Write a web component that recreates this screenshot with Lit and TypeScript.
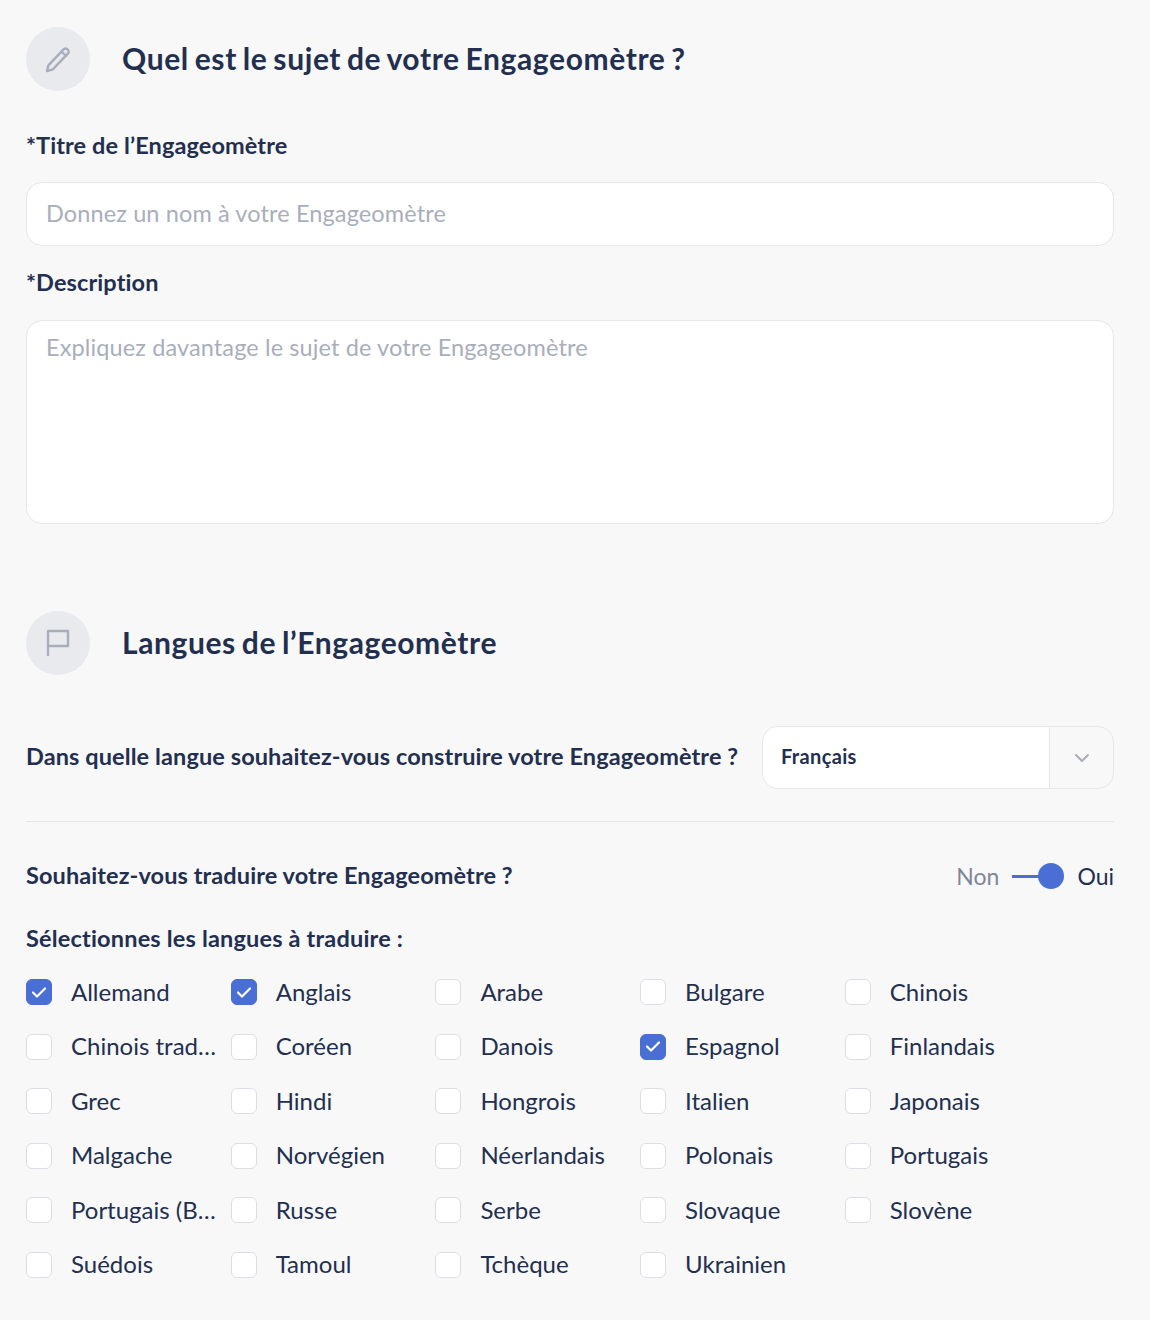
import { LitElement, html, css } from 'lit';
import { customElement, state } from 'lit/decorators.js';

const LANGUAGES = [
  'Allemand', 'Anglais', 'Arabe', 'Bulgare', 'Chinois',
  'Chinois trad…', 'Coréen', 'Danois', 'Espagnol', 'Finlandais',
  'Grec', 'Hindi', 'Hongrois', 'Italien', 'Japonais',
  'Malgache', 'Norvégien', 'Néerlandais', 'Polonais', 'Portugais',
  'Portugais (B…', 'Russe', 'Serbe', 'Slovaque', 'Slovène',
  'Suédois', 'Tamoul', 'Tchèque', 'Ukrainien',
];

@customElement('app-root')
export class AppRoot extends LitElement {
  static styles = css`
    :host {
      display: block;
      min-height: 1320px;
      box-sizing: border-box;
      padding: 27px 36px 0 26px;
      background-color: #f8f8f9;
      color: #232f4f;
      font-family: 'Lato', 'Liberation Sans', sans-serif;
    }

    .section-head {
      display: flex;
      align-items: center;
      gap: 32px;
      height: 64px;
    }

    .circle {
      display: flex;
      align-items: center;
      justify-content: center;
      width: 64px;
      height: 64px;
      border-radius: 50%;
      background-color: #e9eaee;
    }

    h2 {
      margin: 0 0 3px;
      font-size: 30px;
      font-weight: 700;
      line-height: 60px;
      letter-spacing: 0.6px;
      word-spacing: -2px;
    }

    label,
    .question {
      display: block;
      font-size: 23.5px;
      font-weight: 700;
      line-height: 30px;
      letter-spacing: 0.1px;
    }

    .title-label {
      margin: 39px 0 22px;
    }

    .desc-label {
      margin: 21px 0 23px;
    }

    input,
    textarea {
      display: block;
      box-sizing: border-box;
      width: 100%;
      border: 1px solid #e6e7eb;
      border-radius: 16px;
      background: #fff;
      padding: 0 19px;
      outline: none;
      resize: none;
      color: #232f4f;
      font: 400 23.5px/30px 'Lato', 'Liberation Sans', sans-serif;
      letter-spacing: 0.12px;
    }

    input {
      height: 64px;
      padding-bottom: 3px;
    }

    textarea {
      height: 204px;
      padding-top: 11px;
    }

    ::placeholder {
      color: #a9aebc;
      opacity: 1;
    }

    .languages {
      margin-top: 87px;
    }

    .build-row {
      display: flex;
      align-items: center;
      justify-content: space-between;
      height: 63px;
      margin-top: 51px;
      padding-bottom: 32px;
      border-bottom: 1px solid #e6e7eb;
      box-sizing: content-box;
    }

    .build-row .question {
      margin-bottom: 3px;
    }

    .select {
      display: flex;
      width: 352px;
      height: 63px;
      box-sizing: border-box;
      border: 1px solid #e6e7eb;
      border-radius: 16px;
      overflow: hidden;
    }

    .select-value {
      flex: 1;
      display: flex;
      align-items: center;
      padding: 0 0 3px 18px;
      background: #fff;
      font-size: 20px;
      font-weight: 700;
      letter-spacing: 0.35px;
    }

    .select-arrow {
      display: flex;
      align-items: center;
      justify-content: center;
      width: 63px;
      border-left: 1px solid #e6e7eb;
    }

    .translate-row {
      display: flex;
      align-items: center;
      justify-content: space-between;
      height: 30px;
      margin-top: 39px;
    }

    .translate-row .question {
      margin-bottom: 3px;
    }

    .toggle {
      display: flex;
      align-items: center;
      font-size: 23px;
    }

    .toggle .off {
      color: #7f8699;
    }

    .switch {
      position: relative;
      width: 52px;
      height: 26px;
      margin: 0 13px;
    }

    .switch::before {
      content: '';
      position: absolute;
      left: 0;
      top: 12px;
      width: 30px;
      height: 3px;
      background-color: #4a6fd4;
    }

    .switch::after {
      content: '';
      position: absolute;
      right: 0;
      top: 0;
      width: 26px;
      height: 26px;
      border-radius: 50%;
      background-color: #4a6fd4;
    }

    .question.select-title {
      margin-top: 32px;
      letter-spacing: 0.18px;
    }

    .grid {
      display: grid;
      grid-template-columns: repeat(5, 204.7px);
      grid-auto-rows: 54.5px;
      margin-top: 12px;
    }

    .lang {
      display: flex;
      align-items: center;
      gap: 19px;
      font-size: 24px;
      font-weight: 400;
      cursor: pointer;
    }

    .lang-name {
      padding-bottom: 2px;
    }

    .box {
      flex: none;
      display: flex;
      align-items: center;
      justify-content: center;
      box-sizing: border-box;
      width: 26px;
      height: 26px;
      border: 1px solid #dcdee3;
      border-radius: 6px;
      background: #fff;
    }

    .box.on {
      border-color: #4a6fd4;
      background-color: #4a6fd4;
    }
  `;

  @state() checked = new Set(['Allemand', 'Anglais', 'Espagnol']);

  toggle(name: string) {
    const next = new Set(this.checked);
    if (next.has(name)) next.delete(name);
    else next.add(name);
    this.checked = next;
  }

  render() {
    return html`
      <div class="section-head">
        <div class="circle">
          <svg width="30" height="30" viewBox="0 0 30 30" fill="none" stroke="#a9aebc" stroke-width="2.4" stroke-linejoin="round" stroke-linecap="round">
            <path d="M4 27l1.4-5.6L20.8 5.2a2.4 2.4 0 0 1 3.4 0l.8.8a2.4 2.4 0 0 1 0 3.4L9.8 25.4z" />
            <path d="M18.5 7.5l4.5 4.5" />
          </svg>
        </div>
        <h2>Quel est le sujet de votre Engageomètre ?</h2>
      </div>

      <label class="title-label" for="title">*Titre de l’Engageomètre</label>
      <input id="title" placeholder="Donnez un nom à votre Engageomètre" />
      <label class="desc-label" for="desc">*Description</label>
      <textarea id="desc" placeholder="Expliquez davantage le sujet de votre Engageomètre"></textarea>

      <div class="languages">
        <div class="section-head">
          <div class="circle">
            <svg width="30" height="30" viewBox="0 0 30 30" fill="none" stroke="#a9aebc" stroke-width="2.4" stroke-linejoin="round" stroke-linecap="round">
              <path d="M5 27V3h20v15H5" />
            </svg>
          </div>
          <h2>Langues de l’Engageomètre</h2>
        </div>

        <div class="build-row">
          <div class="question">Dans quelle langue souhaitez-vous construire votre Engageomètre ?</div>
          <div class="select">
            <div class="select-value">Français</div>
            <div class="select-arrow">
              <svg width="16" height="10" viewBox="0 0 16 10" fill="none" stroke="#a9aebc" stroke-width="2" stroke-linecap="round" stroke-linejoin="round">
                <path d="M2 2l6 6 6-6" />
              </svg>
            </div>
          </div>
        </div>

        <div class="translate-row">
          <div class="question">Souhaitez-vous traduire votre Engageomètre ?</div>
          <div class="toggle">
            <span class="off">Non</span>
            <span class="switch"></span>
            <span>Oui</span>
          </div>
        </div>

        <div class="question select-title">Sélectionnes les langues à traduire :</div>
        <div class="grid">
          ${LANGUAGES.map((name) => {
            const on = this.checked.has(name);
            return html`
              <div class="lang" @click=${() => this.toggle(name)}>
                <span class="box ${on ? 'on' : ''}">
                  ${on
                    ? html`<svg width="16" height="13" viewBox="0 0 16 13" fill="none" stroke="#fff" stroke-width="2.2" stroke-linecap="round" stroke-linejoin="round"><path d="M2 6.5l4 4 8-8" /></svg>`
                    : ''}
                </span>
                <span class="lang-name">${name}</span>
              </div>
            `;
          })}
        </div>
      </div>
    `;
  }
}

declare global {
  interface HTMLElementTagNameMap {
    'app-root': AppRoot;
  }
}
